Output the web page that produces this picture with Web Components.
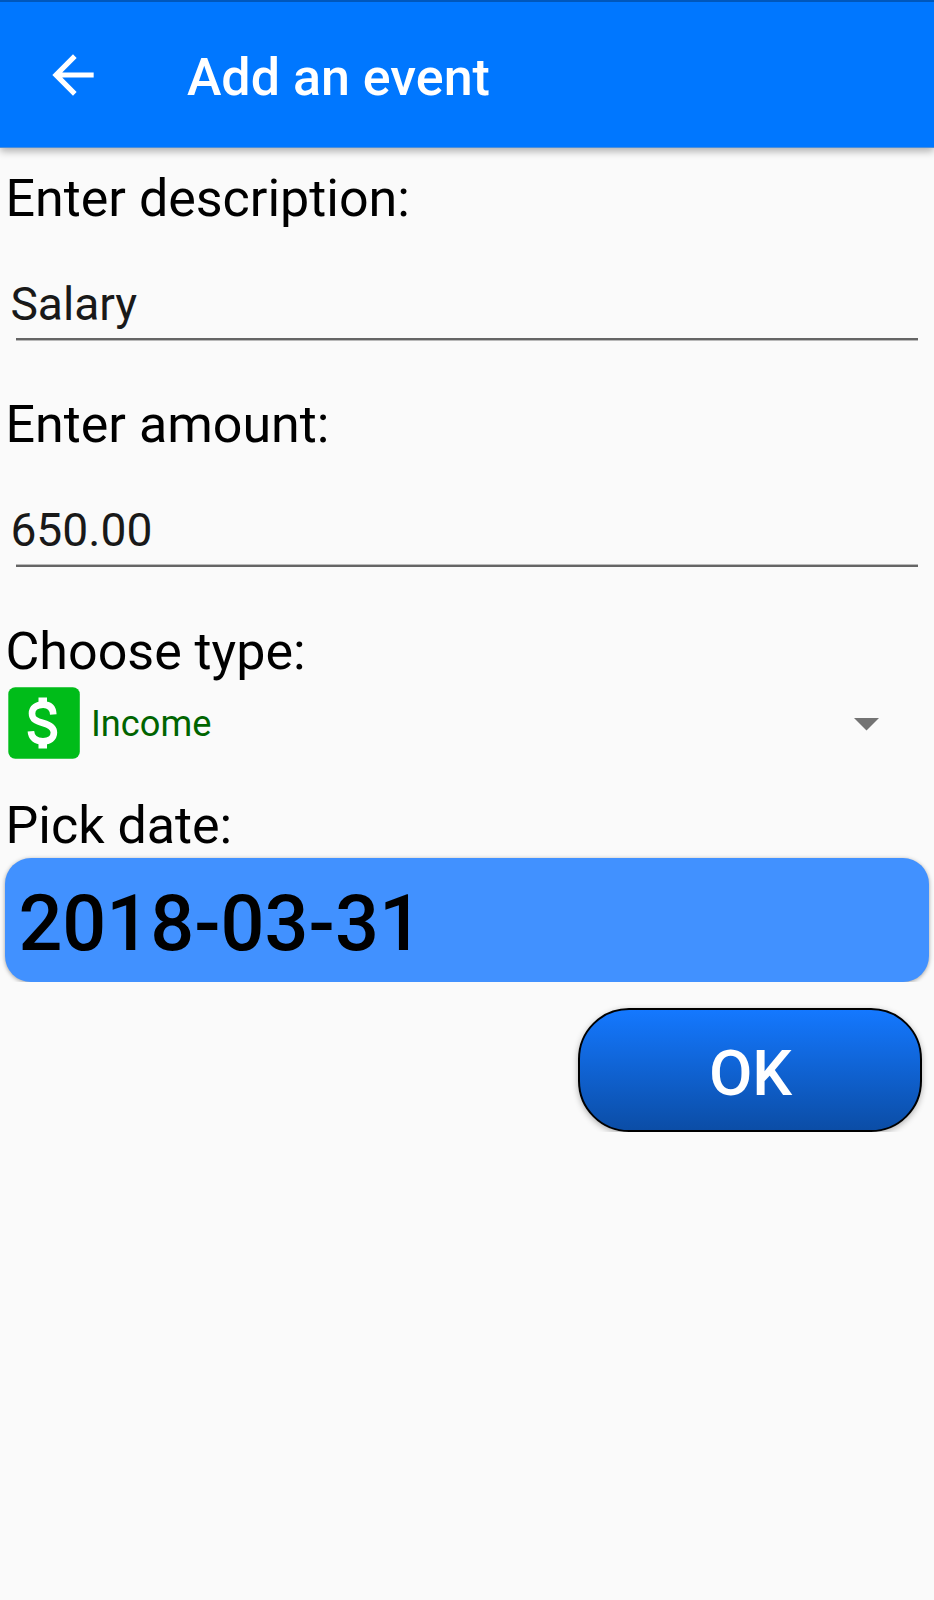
<!DOCTYPE html>
<html lang="en">
<head>
<meta charset="utf-8">
<title>Add an event</title>
<style>
html,body{margin:0;background:#fafafa;font-family:Roboto,"Liberation Sans",sans-serif;color:#000}
</style>
</head>
<body>
<event-page></event-page>
<script>
const define = (name, html) => {
  const t = document.createElement('template');
  t.innerHTML = html;
  customElements.define(name, class extends HTMLElement {
    constructor() {
      super();
      this.attachShadow({mode: 'open'}).append(t.content.cloneNode(true));
    }
  });
};

define('app-bar', `
<style>
:host{display:flex;align-items:center;box-sizing:border-box;height:148px;border-top:2px solid #0057bb;border-bottom:1px solid #4a8fdc;background:#07f;color:#fff;padding-left:41.500px;box-shadow:0 3px 8px rgba(0,0,0,.32);position:relative}
svg{display:block;width:62px;height:62px;margin-right:83.400px}
.title{font-size:52px;font-weight:500;line-height:60px;padding-top:6px;white-space:nowrap}
</style>
<svg viewBox="0 0 24 24" fill="currentColor"><path d="M20 11H7.830l5.590-5.590L12 4l-8 8 8 8 1.410-1.410L7.830 13H20v-2z"/></svg>
<div class="title"><slot></slot></div>`);

define('form-label', `
<style>:host{display:block;height:60px;line-height:60px;font-size:52px;padding-left:5.500px;white-space:nowrap}</style>
<slot></slot>`);

define('text-field', `
<style>
:host{display:block;color:#191919;font-size:46.200px}
.value{height:64px;line-height:60px;padding-left:10.400px}
.line{height:3px;margin:0 16px;background:var(--rule)}
</style>
<div class="value"><slot></slot></div><div class="line"></div>`);

define('type-picker', `
<style>
:host{display:flex;align-items:center;height:72px;padding:0 55px 0 8px;color:#006400;font-size:36.200px}
.icon{display:block;width:72px;height:72px}
.text{flex:1;padding-left:11px;line-height:42px;padding-top:1px}
.arrow{display:block;width:25px;height:13px;margin-top:2.500px}
</style>
<svg class="icon" viewBox="0 0 72 72"><rect x=".3" y=".3" width="71.500" height="71.500" rx="7" fill="#00bc19"/>
<path d="M30.500 10.500h8.500v7h-8.500zM30.500 54.500h8.500v7h-8.500z" fill="#fff"/>
<path d="M45.300 27.500C45 20.500 41.400 17.600 35.200 17.600C28.600 17.600 24 20.800 24 26.400C24 32 28 34 35 36C42 38 45.900 40.300 45.900 45.600C45.900 51.200 41.500 54.300 35 54.300C27.500 54.300 23.300 50.700 22.900 44.200" fill="none" stroke="#fff" stroke-width="6.600"/></svg>
<div class="text"><slot></slot></div>
<svg class="arrow" viewBox="0 0 25 13"><path d="M0 0h25L12.500 12.600z" fill="#737373"/></svg>`);

define('date-button', `
<style>
:host{display:block;padding:4px 5.500px 0 5.200px;overflow:hidden}
.box{box-sizing:border-box;height:124px;border-radius:26px;background:#4191ff;box-shadow:0 1px 4px rgba(0,0,0,.36);padding-left:13.200px;font-size:77.400px;font-weight:500;line-height:131px;white-space:nowrap}
</style>
<div class="box"><slot></slot></div>`);

define('ok-button', `
<style>
:host{display:block;overflow:hidden;padding:4px 12px 0;margin-left:auto;width:344px}
.box{box-sizing:border-box;height:124px;border:2px solid #000;border-radius:51px;background:linear-gradient(#1478ff,#0b4da6);box-shadow:0 2px 6px rgba(0,0,0,.3);color:#fff;text-align:center;font-size:63px;font-weight:500;line-height:128px;padding-left:1px}
</style>
<div class="box"><slot></slot></div>`);

define('event-page', `
<style>
:host{display:block;min-height:1600px;background:#fafafa}
main{display:flex;flex-direction:column}
.l1{margin-top:21px}.f1{margin-top:45px;--rule:linear-gradient(#656565 2px,#b9b9b9 2px)}
.l2{margin-top:54px}.f2{margin-top:45px;--rule:linear-gradient(#b9b9b9 1px,#656565 1px)}
.l3{margin-top:55px}
type-picker{margin-top:5px}.l4{margin-top:37px}date-button{margin-top:-2px}ok-button{margin-top:22px}
</style>
<app-bar>Add an event</app-bar>
<main>
<form-label class="l1">Enter description:</form-label>
<text-field class="f1">Salary</text-field>
<form-label class="l2">Enter amount:</form-label>
<text-field class="f2">650.00</text-field>
<form-label class="l3">Choose type:</form-label>
<type-picker>Income</type-picker>
<form-label class="l4">Pick date:</form-label>
<date-button>2018-03-31</date-button>
<ok-button>OK</ok-button>
</main>`);
</script>
</body>
</html>
